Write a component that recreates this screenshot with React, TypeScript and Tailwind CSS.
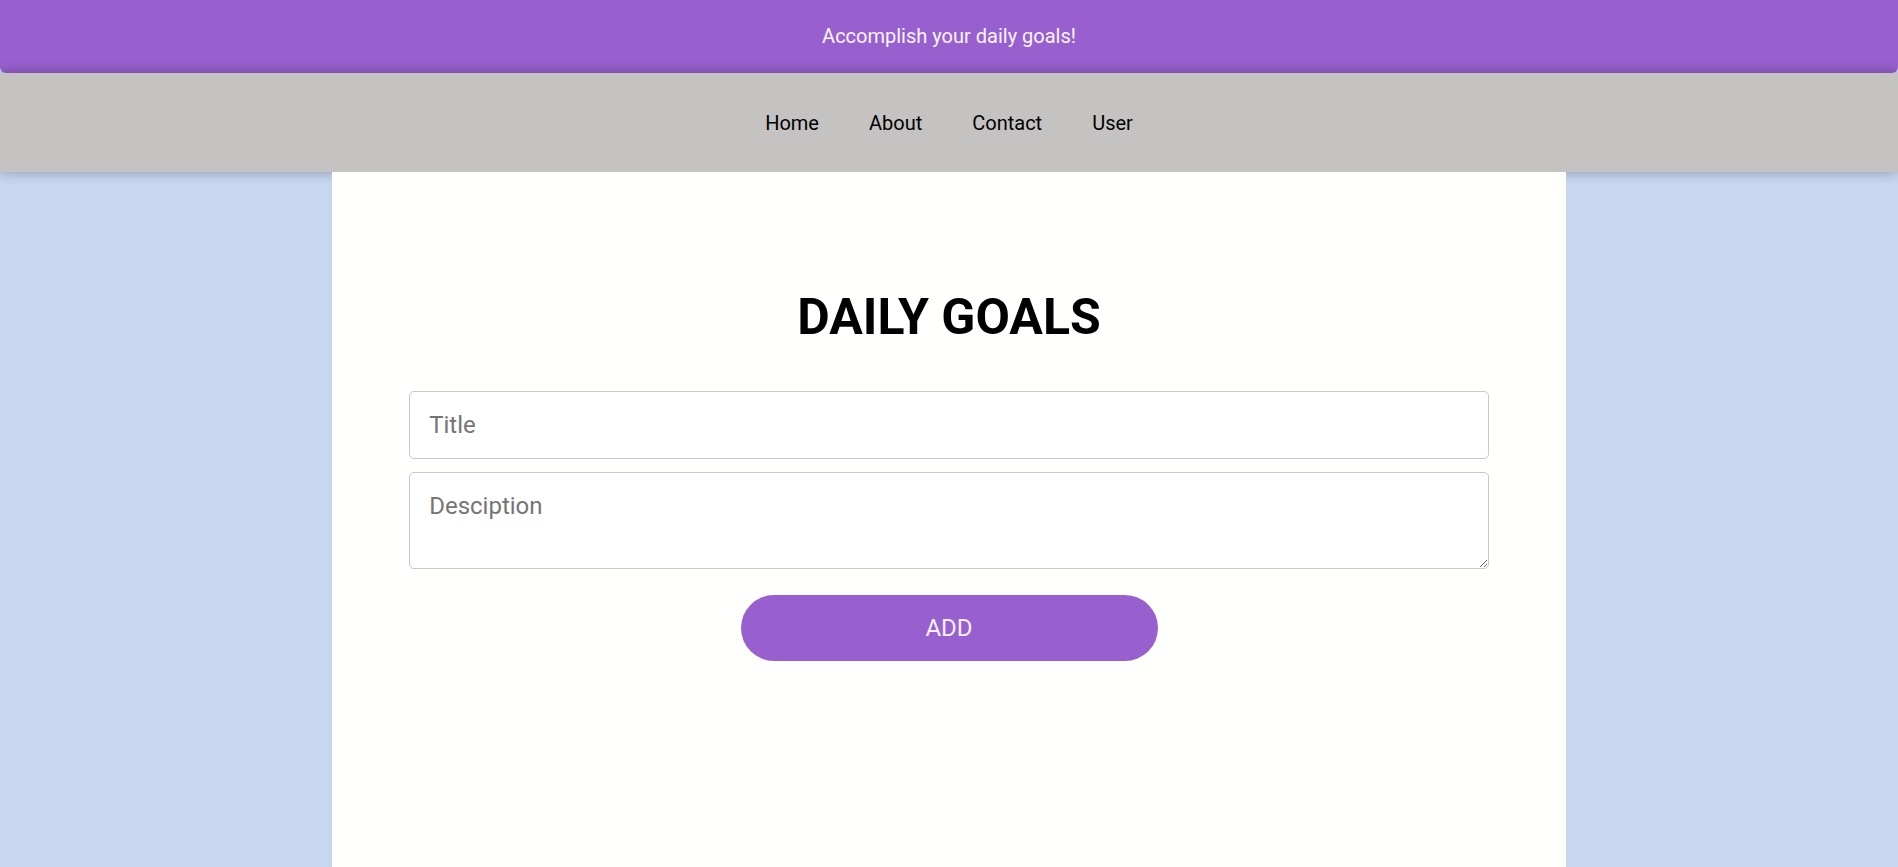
import React from "react";

const App = () => {
  return (
    <div className="min-h-screen flex flex-col bg-[#c8d6f0] font-['Roboto','Liberation_Sans',sans-serif]">
      <header className="h-[73px] pb-[1px] bg-[#9860cf] rounded-b-[6px] flex items-center justify-center text-[20px] text-[#f8f4ff]">
        Accomplish your daily goals!
      </header>
      <nav className="h-[99px] bg-[#c4c3c1] shadow-[0_0_12px_rgba(0,0,0,0.3)] flex items-center justify-center gap-[50px] text-[20px] text-black">
        <a href="#">Home</a>
        <a href="#">About</a>
        <a href="#">Contact</a>
        <a href="#">User</a>
      </nav>
      <main className="flex-1 mx-auto w-[65%] bg-[#fffffd] px-[77px] pt-[117px] flex flex-col items-center">
        <h1 className="text-[50px] leading-[56px] font-bold text-black mb-[46px]">
          DAILY GOALS
        </h1>
        <form
          className="w-full flex flex-col items-center gap-[13px]"
          onSubmit={(e) => e.preventDefault()}
        >
          <input
            type="text"
            placeholder="Title"
            className="w-full h-[68px] border border-[#c8c8c8] rounded-[5px] bg-white px-[19px] text-[24px] outline-none placeholder:text-[#757575]"
          />
          <textarea
            rows={2}
            placeholder="Desciption"
            className="w-full h-[97px] border border-[#c8c8c8] rounded-[5px] bg-white p-[19px] text-[24px] leading-[28px] outline-none placeholder:text-[#757575]"
          />
          <button
            type="submit"
            className="mt-[13px] w-[417px] h-[66px] rounded-full bg-[#9860cf] text-[24px] text-[#f4f0ff]"
          >
            ADD
          </button>
        </form>
      </main>
    </div>
  );
};

export default App;
